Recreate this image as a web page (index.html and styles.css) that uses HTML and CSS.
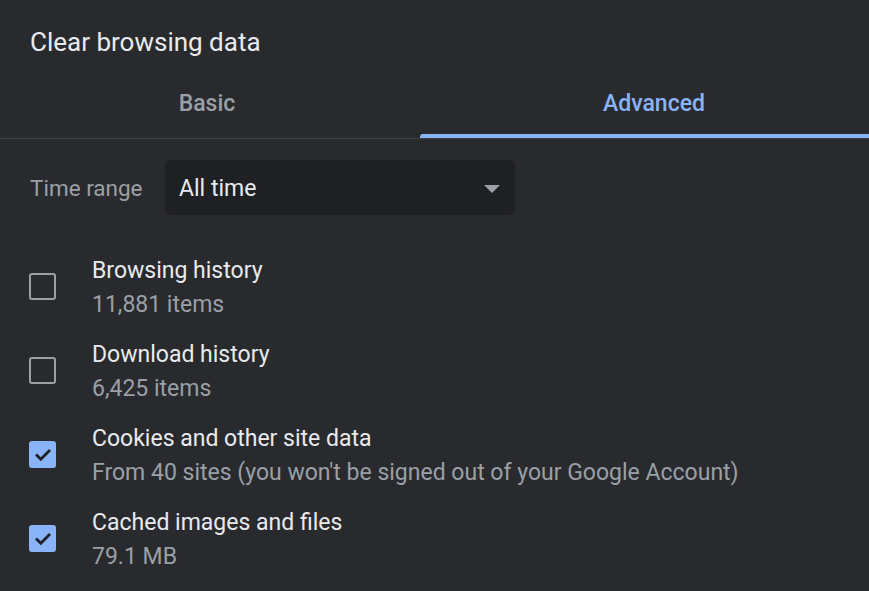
FILE: index.html
```html
<!DOCTYPE html>
<html lang="en">

<head>
    <meta charset="UTF-8">
    <meta name="viewport" content="width=device-width, initial-scale=1.0">
    <title>Clear browsing data</title>
    <link rel="stylesheet" href="styles.css">
</head>

<body>

    <div class="dialog">
        <!-- Title -->
        <h1 class="dialog-title">Clear browsing data</h1>

        <!-- Tabs -->
        <div class="tabs">
            <div class="tab">Basic</div>
            <div class="tab active">Advanced</div>
        </div>

        <!-- Time range -->
        <div class="time-row">
            <span class="time-label">Time range</span>
            <div class="select">
                <span>All time</span>
                <span class="select-arrow"></span>
            </div>
        </div>

        <!-- Data types -->
        <div class="items">
            <div class="item">
                <span class="checkbox"></span>
                <div class="item-text">
                    <div class="item-label">Browsing history</div>
                    <div class="item-sub">11,881 items</div>
                </div>
            </div>
            <div class="item">
                <span class="checkbox"></span>
                <div class="item-text">
                    <div class="item-label">Download history</div>
                    <div class="item-sub">6,425 items</div>
                </div>
            </div>
            <div class="item">
                <span class="checkbox checked">
                    <svg viewBox="0 0 27 27" width="27" height="27"><path d="M7 13.5l4.8 4.8L21 9" fill="none" stroke="#202124" stroke-width="2.8"/></svg>
                </span>
                <div class="item-text">
                    <div class="item-label">Cookies and other site data</div>
                    <div class="item-sub">From 40 sites (you won't be signed out of your Google Account)</div>
                </div>
            </div>
            <div class="item">
                <span class="checkbox checked">
                    <svg viewBox="0 0 27 27" width="27" height="27"><path d="M7 13.5l4.8 4.8L21 9" fill="none" stroke="#202124" stroke-width="2.8"/></svg>
                </span>
                <div class="item-text">
                    <div class="item-label">Cached images and files</div>
                    <div class="item-sub">79.1 MB</div>
                </div>
            </div>
        </div>
    </div>

</body>

</html>
```

FILE: styles.css
```css
/* General Styles */
html, body {
    margin: 0;
    padding: 0;
    background-color: #292a2d;
    overflow: hidden;
}

body {
    font-family: Roboto, "Liberation Sans", sans-serif;
    color: #e8eaed;
}

.dialog {
    width: 888px;
}

.dialog-title {
    margin: 0;
    padding: 26px 0 0 30px;
    font-size: 26px;
    font-weight: 400;
    line-height: 32px;
    height: 48px;
}

/* Tabs */
.tabs {
    display: flex;
    border-bottom: 1px solid #3c4043;
}

.tab {
    position: relative;
    height: 64px;
    box-sizing: border-box;
    padding-top: 15px;
    line-height: 30px;
    text-align: center;
    font-size: 23px;
    font-weight: 500;
    color: #9aa0a6;
}

.tab:first-child {
    flex: 0 0 414px;
    margin-right: 6px;
}

.tab.active {
    flex: 1;
    color: #8ab4f8;
}

.tab.active::after {
    content: "";
    position: absolute;
    left: 0;
    right: 0;
    bottom: 0;
    height: 4px;
    background-color: #8ab4f8;
    border-radius: 3px 3px 0 0;
}

/* Time range */
.time-row {
    display: flex;
    align-items: center;
    margin-top: 21px;
    padding-left: 30px;
}

.time-label {
    font-size: 22.5px;
    color: #9aa0a6;
    width: 135px;
}

.select {
    display: flex;
    align-items: center;
    justify-content: space-between;
    width: 350px;
    height: 55px;
    box-sizing: border-box;
    padding: 1px 15px 0 14px;
    background-color: #1f2023;
    border-radius: 5px;
    font-size: 23px;
    color: #e8eaed;
}

.select-arrow {
    width: 0;
    height: 0;
    border-left: 8px solid transparent;
    border-right: 8px solid transparent;
    border-top: 8px solid #9aa0a6;
    margin-top: 1px;
}

/* Items */
.items {
    padding-top: 29px;
}

.item {
    display: flex;
    align-items: center;
    height: 84px;
}

.checkbox {
    display: flex;
    align-items: center;
    justify-content: center;
    flex: 0 0 27px;
    width: 27px;
    height: 27px;
    box-sizing: border-box;
    margin-left: 29px;
    margin-right: 36px;
    border: 2.7px solid #9aa0a6;
    border-radius: 3px;
}

.checkbox.checked {
    border: none;
    background-color: #8ab4f8;
}

.item-text {
    margin-top: 3px;
}

.item-label {
    font-size: 23px;
    line-height: 34px;
    color: #e8eaed;
}

.item-sub {
    font-size: 23px;
    line-height: 34px;
    color: #9aa0a6;
}
```
